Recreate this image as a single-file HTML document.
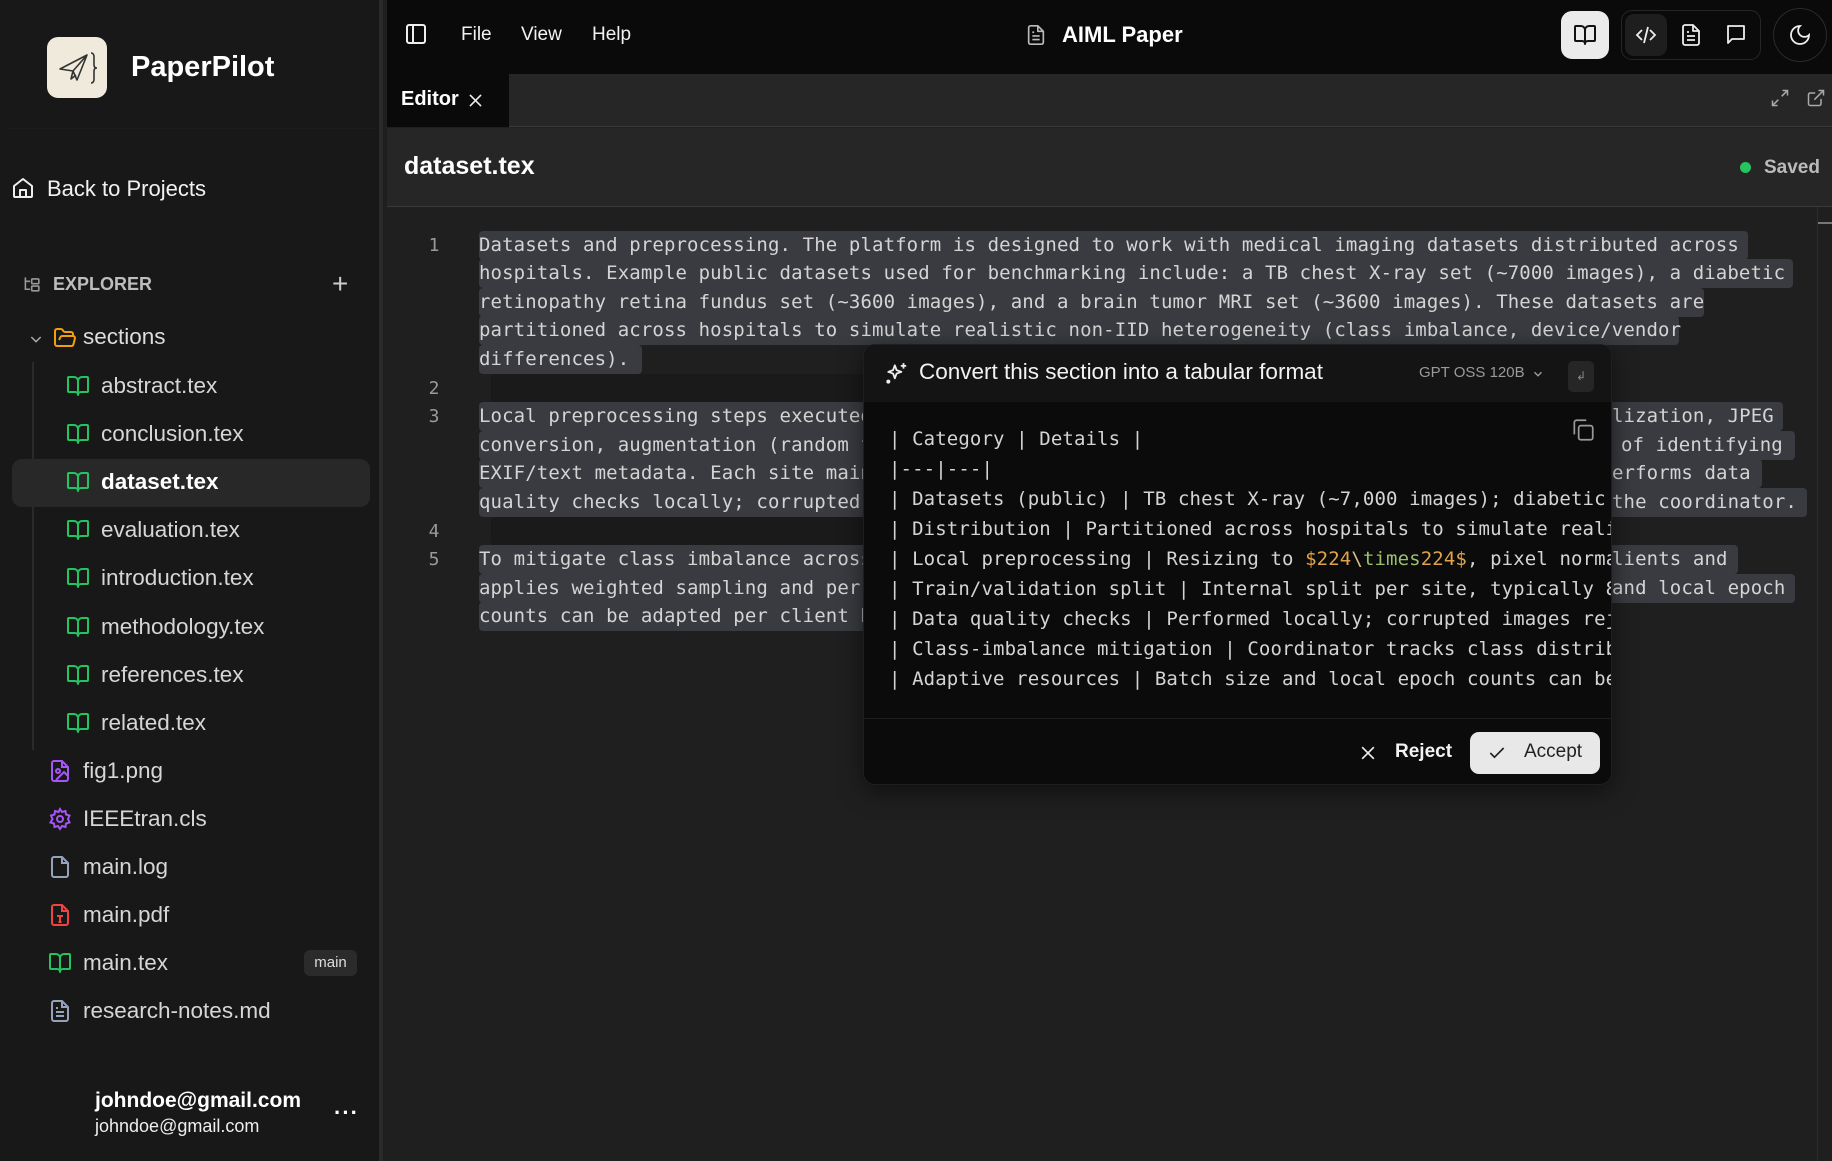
<!DOCTYPE html>
<html><head><meta charset="utf-8"><style>
*{margin:0;padding:0;box-sizing:border-box}
body{width:1832px;height:1161px;overflow:hidden;background:#1f1f1f;font-family:"Liberation Sans",sans-serif;color:#e5e5e5;position:relative}
.a{position:absolute}
.mono{font-family:"DejaVu Sans Mono","Liberation Mono",monospace;font-size:19px;white-space:pre;letter-spacing:0.12px}
.row{position:absolute;height:29px;line-height:29px;background:#393b40;border-radius:4px;color:#d4d4d4}
.ln{position:absolute;width:40px;text-align:center;color:#9a9a9a;font-family:"DejaVu Sans Mono",monospace;font-size:18px;left:414px}
.f{position:absolute;left:101px;font-size:22.5px;color:#d6d6d6;transform:translateY(-50%)}
.fi{position:absolute;left:66px;transform:translateY(-50%)}
.t{position:absolute;left:83px;font-size:22.5px;color:#d6d6d6;transform:translateY(-50%)}
.ti{position:absolute;left:48px;transform:translateY(-50%)}
svg{display:block}
.pl{position:absolute;left:0;height:30px;line-height:30px;color:#d4d4d4}
</style></head><body>
<div class="a" style="left:0;top:0;width:383px;height:1161px;background:#181818;border-right:4px solid #2a2a2a"></div>
<div class="a" style="left:47px;top:37px;width:60px;height:61px;background:#efeadb;border-radius:11px">
<svg width="60" height="61" viewBox="0 0 60 61"><path d="M13 32 L40 18 L30 43 L26 34 Z M26 34 L40 18 M26 34 L24 42 L29 38" fill="none" stroke="#333" stroke-width="1.6" stroke-linejoin="round"/><path d="M44 16 q3 0 3 4 v8 q0 3 3 3 q-3 0 -3 3 v8 q0 4 -3 4" fill="none" stroke="#333" stroke-width="1.6"/></svg></div>
<div class="a" style="left:131px;top:51px;font-size:29px;font-weight:bold;color:#fff">PaperPilot</div>
<div class="a" style="left:10px;top:128px;width:365px;height:1px;background:#1d1d1d"></div>
<svg class="a" style="left:11px;top:176px" width="24" height="24" viewBox="0 0 24 24" fill="none" stroke="#eee" stroke-width="2" stroke-linejoin="round"><path d="M3 10l9-7 9 7v10a1 1 0 0 1-1 1H4a1 1 0 0 1-1-1z"/><path d="M9 21v-7h6v7"/></svg>
<div class="a" style="left:47px;top:176px;font-size:22px;color:#f2f2f2">Back to Projects</div>
<svg class="a" style="left:23px;top:275px" width="19" height="19" viewBox="0 0 24 24" fill="none" stroke="#999" stroke-width="2"><path d="M3 3v15h6M3 8h6"/><rect x="11" y="5" width="9" height="6" rx="1"/><rect x="11" y="14" width="9" height="6" rx="1"/></svg>
<div class="a" style="left:53px;top:274px;font-size:18px;font-weight:bold;color:#bdbdbd">EXPLORER</div>
<div class="a" style="left:332px;top:268px;font-size:28px;color:#ccc;font-weight:300">+</div>
<svg class="a" style="left:28px;top:331px" width="16" height="16" viewBox="0 0 24 24" fill="none" stroke="#aaa" stroke-width="2.2"><path d="M5 9l7 7 7-7"/></svg>
<svg class="a" style="left:53px;top:326px" width="24" height="24" viewBox="0 0 24 24" fill="none" stroke="#f59e0b" stroke-width="2" stroke-linejoin="round"><path d="M6 14l1.5-3A2 2 0 0 1 9.2 10H20a2 2 0 0 1 1.9 2.5l-1.5 6A2 2 0 0 1 18.5 20H4a2 2 0 0 1-2-2V5a2 2 0 0 1 2-2h3.9a2 2 0 0 1 1.7.9l.8 1.2a2 2 0 0 0 1.7.9H18a2 2 0 0 1 2 2v2"/></svg>
<div class="a" style="left:83px;top:324px;font-size:22.5px;color:#ddd">sections</div>
<div class="a" style="left:32px;top:362px;width:2px;height:388px;background:#2a2a2a"></div>
<div class="a" style="left:12px;top:459px;width:358px;height:48px;background:#282828;border-radius:10px"></div>
<div id="nested"></div>
<div class="a" style="left:304px;top:950px;width:53px;height:26px;background:#2b2b2b;border-radius:6px;font-size:15px;color:#ddd;text-align:center;line-height:26px">main</div>
<div class="a" style="left:95px;top:1089px;font-size:21px;font-weight:bold;color:#fff">johndoe@gmail.com</div>
<div class="a" style="left:95px;top:1116px;font-size:18px;color:#eee">johndoe@gmail.com</div>
<div class="a" style="left:334px;top:1100px;font-size:22px;color:#fff;letter-spacing:1px;font-weight:bold">···</div>

<div class="a" style="left:387px;top:0;width:1445px;height:74px;background:#0a0a0a"></div>
<svg class="a" style="left:404px;top:22px" width="24" height="24" viewBox="0 0 24 24" fill="none" stroke="#eee" stroke-width="2"><rect x="3" y="3" width="18" height="18" rx="2"/><path d="M9 3v18"/></svg>
<div class="a" style="left:461px;top:24px;font-size:19px;color:#f2f2f2">File</div>
<div class="a" style="left:521px;top:24px;font-size:19px;color:#f2f2f2">View</div>
<div class="a" style="left:592px;top:24px;font-size:19px;color:#f2f2f2">Help</div>
<svg class="a" style="left:1025px;top:23px" width="22" height="24" viewBox="0 0 24 24" fill="none" stroke="#bbb" stroke-width="1.8" stroke-linejoin="round"><path d="M14 2H6a2 2 0 0 0-2 2v16a2 2 0 0 0 2 2h12a2 2 0 0 0 2-2V8z"/><path d="M14 2v6h6M8 13h8M8 17h8M8 9h2"/></svg>
<div class="a" style="left:1062px;top:22px;font-size:22px;font-weight:bold;color:#fff">AIML Paper</div>
<div class="a" style="left:1561px;top:11px;width:48px;height:48px;background:#ebebeb;border-radius:11px"></div>
<svg class="a" style="left:1573px;top:23px" width="24" height="24" viewBox="0 0 24 24" fill="none" stroke="#111" stroke-width="2" stroke-linejoin="round"><path d="M12 7v14"/><path d="M3 18a1 1 0 0 1-1-1V4a1 1 0 0 1 1-1h5a4 4 0 0 1 4 4 4 4 0 0 1 4-4h5a1 1 0 0 1 1 1v13a1 1 0 0 1-1 1h-6a3 3 0 0 0-3 3 3 3 0 0 0-3-3z"/></svg>
<div class="a" style="left:1621px;top:10px;width:140px;height:50px;border:1px solid #262626;border-radius:11px"></div>
<div class="a" style="left:1625px;top:14px;width:42px;height:42px;background:#1e1e1e;border-radius:9px"></div>
<svg class="a" style="left:1634px;top:23px" width="24" height="24" viewBox="0 0 24 24" fill="none" stroke="#eee" stroke-width="1.8"><path d="M8 7l-5 5 5 5M16 7l5 5-5 5M14 4l-4 16"/></svg>
<svg class="a" style="left:1679px;top:23px" width="24" height="24" viewBox="0 0 24 24" fill="none" stroke="#eee" stroke-width="1.8" stroke-linejoin="round"><path d="M14 2H6a2 2 0 0 0-2 2v16a2 2 0 0 0 2 2h12a2 2 0 0 0 2-2V8z"/><path d="M14 2v6h6M8 13h8M8 17h8M8 9h2"/></svg>
<svg class="a" style="left:1724px;top:23px" width="24" height="24" viewBox="0 0 24 24" fill="none" stroke="#eee" stroke-width="1.8" stroke-linejoin="round"><path d="M4 3h16v13H8l-4 4z"/></svg>
<div class="a" style="left:1773px;top:8px;width:54px;height:54px;border:1px solid #2a2a2a;border-radius:50%"></div>
<svg class="a" style="left:1788px;top:23px" width="24" height="24" viewBox="0 0 24 24" fill="none" stroke="#eee" stroke-width="1.8"><path d="M12 3a6 6 0 0 0 9 9 9 9 0 1 1-9-9z"/></svg>

<div class="a" style="left:387px;top:74px;width:1445px;height:53px;background:#262626;border-bottom:1px solid #3a3a3a"></div>
<div class="a" style="left:387px;top:74px;width:122px;height:53px;background:#0a0a0a"></div>
<div class="a" style="left:401px;top:88px;font-size:20px;font-weight:bold;color:#fff">Editor</div>
<svg class="a" style="left:466px;top:91px" width="19" height="19" viewBox="0 0 24 24" fill="none" stroke="#eee" stroke-width="2"><path d="M5 5l14 14M19 5L5 19"/></svg>
<svg class="a" style="left:1770px;top:88px" width="20" height="20" viewBox="0 0 24 24" fill="none" stroke="#aaa" stroke-width="1.8"><path d="M15 3h6v6M21 3l-7 7M9 21H3v-6M3 21l7-7"/></svg>
<svg class="a" style="left:1806px;top:88px" width="20" height="20" viewBox="0 0 24 24" fill="none" stroke="#aaa" stroke-width="1.8"><path d="M15 3h6v6M10 14L21 3M18 13v6a2 2 0 0 1-2 2H5a2 2 0 0 1-2-2V8a2 2 0 0 1 2-2h6"/></svg>
<div class="a" style="left:387px;top:128px;width:1445px;height:79px;background:#262626;border-bottom:1px solid #3a3a3a"></div>
<div class="a" style="left:404px;top:152px;font-size:25px;font-weight:bold;color:#fff">dataset.tex</div>
<div class="a" style="left:1740px;top:162px;width:11px;height:11px;border-radius:50%;background:#22c55e"></div>
<div class="a" style="left:1764px;top:157px;font-size:19px;font-weight:bold;color:#bbb">Saved</div>
<div class="a" style="left:1817px;top:207px;width:1px;height:954px;background:#2c2c2c"></div>
<div class="a" style="left:1818px;top:222px;width:14px;height:2px;background:#777"></div>

<div class="ln" style="top:231px;line-height:29px">1</div>
<div class="ln" style="top:374px;line-height:29px">2</div>
<div class="ln" style="top:402px;line-height:29px">3</div>
<div class="ln" style="top:517px;line-height:29px">4</div>
<div class="ln" style="top:545px;line-height:29px">5</div>
<div class="mono">
<div class="row" style="left:479px;top:231px;width:1269px">Datasets and preprocessing. The platform is designed to work with medical imaging datasets distributed across</div>
<div class="row" style="left:479px;top:259px;width:1314px">hospitals. Example public datasets used for benchmarking include: a TB chest X-ray set (~7000 images), a diabetic</div>
<div class="row" style="left:479px;top:288px;width:1225px">retinopathy retina fundus set (~3600 images), and a brain tumor MRI set (~3600 images). These datasets are</div>
<div class="row" style="left:479px;top:316px;width:1200px">partitioned across hospitals to simulate realistic non-IID heterogeneity (class imbalance, device/vendor</div>
<div class="row" style="left:479px;top:345px;width:163px">differences).</div>
<div class="row" style="left:491px;top:374px;width:500px;background:#1a1a1a"></div>
<div class="row" style="left:479px;top:402px;width:1304px">Local preprocessing steps executed at each hospital include resizing to 224x224, pixel norma<span class="a" style="left:1133px">lization, JPEG</span></div>
<div class="row" style="left:479px;top:431px;width:1316px">conversion, augmentation (random flips, rotations) and removal of any patient metadata capable<span class="a" style="left:1142px">of identifying</span></div>
<div class="row" style="left:479px;top:459px;width:1283px">EXIF/text metadata. Each site maintains its own train/validation split and also per<span class="a" style="left:1133px">erforms data</span></div>
<div class="row" style="left:479px;top:488px;width:1328px">quality checks locally; corrupted images are rejected and only summary statistics go to<span class="a" style="left:1133px">the coordinator.</span></div>
<div class="row" style="left:491px;top:517px;width:500px;background:#1a1a1a"></div>
<div class="row" style="left:479px;top:545px;width:1259px">To mitigate class imbalance across hospitals, the coordinator tracks class distributions per c<span class="a" style="left:1133px">lients and</span></div>
<div class="row" style="left:479px;top:574px;width:1316px">applies weighted sampling and per-class loss weighting. Batch size and local epoch counts and<span class="a" style="left:1133px">and local epoch</span></div>
<div class="row" style="left:479px;top:602px;width:500px">counts can be adapted per client based on resources.</div>
</div>

<div class="a" style="left:863px;top:344px;width:749px;height:441px;background:#0b0b0b;border:1px solid #1f1f1f;border-radius:12px;overflow:hidden;box-shadow:0 6px 24px rgba(0,0,0,.5)">
 <div class="a" style="left:0;top:0;width:749px;height:57px;background:#141414"></div>
 <svg class="a" style="left:20px;top:16px" width="26" height="26" viewBox="0 0 24 24" fill="none" stroke="#eee" stroke-width="1.7" stroke-linejoin="round"><path d="M10 4l1.6 4.4L16 10l-4.4 1.6L10 16l-1.6-4.4L4 10l4.4-1.6z"/><path d="M18 2v5M15.5 4.5h5"/><circle cx="4" cy="19" r="1" fill="#eee"/></svg>
 <div class="a" style="left:55px;top:14px;font-size:22.5px;color:#f2f2f2">Convert this section into a tabular format</div>
 <div class="a" style="left:555px;top:19px;font-size:15px;color:#9a9a9a">GPT OSS 120B</div>
 <svg class="a" style="left:667px;top:22px" width="14" height="14" viewBox="0 0 24 24" fill="none" stroke="#999" stroke-width="2.5"><path d="M6 9l6 6 6-6"/></svg>
 <div class="a" style="left:704px;top:16px;width:26px;height:31px;background:#262626;border-radius:5px;color:#888;font-size:12px;text-align:center;line-height:31px">↲</div>
 <svg class="a" style="left:706px;top:72px" width="26" height="26" viewBox="0 0 24 24" fill="none" stroke="#999" stroke-width="1.6"><rect x="8" y="8" width="13" height="13" rx="2"/><path d="M4 16V5a2 2 0 0 1 2-2h9"/></svg>
 <div class="a mono" style="left:25px;top:79px;width:724px;height:300px;overflow:hidden">
  <div class="pl" style="top:0">| Category | Details |</div>
  <div class="pl" style="top:30px">|---|---|</div>
  <div class="pl" style="top:60px">| Datasets (public) | TB chest X-ray (~7,000 images); diabetic retinopathy</div>
  <div class="pl" style="top:90px">| Distribution | Partitioned across hospitals to simulate realistic</div>
  <div class="pl" style="top:120px">| Local preprocessing | Resizing to <span style="color:#e0a24a">$224</span><span style="color:#d6c08a">\</span><span style="color:#9bbf6a">times</span><span style="color:#e0a24a">224$</span>, pixel normalization</div>
  <div class="pl" style="top:150px">| Train/validation split | Internal split per site, typically 80/20</div>
  <div class="pl" style="top:180px">| Data quality checks | Performed locally; corrupted images rejected</div>
  <div class="pl" style="top:210px">| Class-imbalance mitigation | Coordinator tracks class distributions</div>
  <div class="pl" style="top:240px">| Adaptive resources | Batch size and local epoch counts can be adapted</div>
 </div>
 <div class="a" style="left:0;top:373px;width:749px;height:1px;background:#1e1e1e"></div>
 <svg class="a" style="left:494px;top:398px" width="20" height="20" viewBox="0 0 24 24" fill="none" stroke="#eee" stroke-width="2"><path d="M5 5l14 14M19 5L5 19"/></svg>
 <div class="a" style="left:531px;top:396px;font-size:19px;font-weight:bold;color:#f2f2f2">Reject</div>
 <div class="a" style="left:606px;top:387px;width:130px;height:42px;background:#e8e8e8;border-radius:9px"></div>
 <svg class="a" style="left:623px;top:398px" width="20" height="20" viewBox="0 0 24 24" fill="none" stroke="#222" stroke-width="2"><path d="M4 12l5 5L20 6"/></svg>
 <div class="a" style="left:660px;top:396px;font-size:19px;color:#222">Accept</div>
</div>

<script>
var book='<svg width="24" height="24" viewBox="0 0 24 24" fill="none" stroke="#22c55e" stroke-width="2" stroke-linejoin="round"><path d="M12 7v14"/><path d="M3 18a1 1 0 0 1-1-1V4a1 1 0 0 1 1-1h5a4 4 0 0 1 4 4 4 4 0 0 1 4-4h5a1 1 0 0 1 1 1v13a1 1 0 0 1-1 1h-6a3 3 0 0 0-3 3 3 3 0 0 0-3-3z"/></svg>';
var names=["abstract.tex","conclusion.tex","dataset.tex","evaluation.tex","introduction.tex","methodology.tex","references.tex","related.tex"];
var h='';
names.forEach(function(n,i){var y=386+i*48.1;h+='<div class="fi" style="top:'+y+'px">'+book+'</div><div class="f" style="top:'+y+'px;'+(i==2?'color:#fff;font-weight:bold':'')+'">'+n+'</div>';});
var fp='<path d="M14 2H6a2 2 0 0 0-2 2v16a2 2 0 0 0 2 2h12a2 2 0 0 0 2-2V8z"/><path d="M14 2v6h6"/>';
var ic=[
'<svg width="24" height="24" viewBox="0 0 24 24" fill="none" stroke="#a855f7" stroke-width="2">'+fp+'<circle cx="10" cy="12" r="2"/><path d="M20 17l-4-4-8 8"/></svg>',
'<svg width="24" height="24" viewBox="0 0 24 24" fill="none" stroke="#a855f7" stroke-width="2"><circle cx="12" cy="12" r="3"/><path d="M12 2l2 3 3.5-1 .5 3.5 3.5 1-1.5 3.5 1.5 3.5-3.5 1-.5 3.5-3.5-1-2 3-2-3-3.5 1-.5-3.5-3.5-1L4.5 12 3 8.5l3.5-1L7 4l3.5 1z"/></svg>',
'<svg width="24" height="24" viewBox="0 0 24 24" fill="none" stroke="#94a3b8" stroke-width="2">'+fp+'</svg>',
'<svg width="24" height="24" viewBox="0 0 24 24" fill="none" stroke="#ef4444" stroke-width="2">'+fp+'<path d="M9 13h6M12 13v6M10.5 19h3"/></svg>',
book,
'<svg width="24" height="24" viewBox="0 0 24 24" fill="none" stroke="#94a3b8" stroke-width="2">'+fp+'<path d="M8 13h8M8 17h8M8 9h2"/></svg>'];
var tn=["fig1.png","IEEEtran.cls","main.log","main.pdf","main.tex","research-notes.md"];
tn.forEach(function(n,i){var y=771+i*47.9;h+='<div class="ti" style="top:'+y+'px">'+ic[i]+'</div><div class="t" style="top:'+y+'px">'+n+'</div>';});
document.getElementById('nested').innerHTML=h;
</script>
</body></html>
